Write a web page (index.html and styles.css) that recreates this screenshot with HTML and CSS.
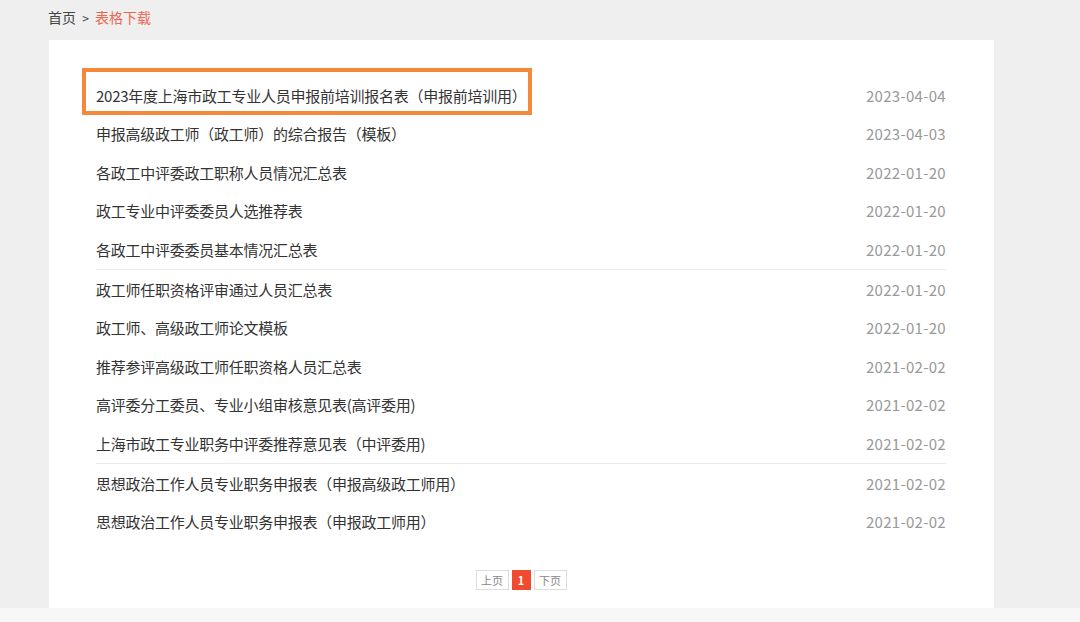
FILE: index.html
```html
<!DOCTYPE html>
<html lang="zh-CN">
<head>
  <meta charset="UTF-8">
  <title>表格下载</title>
  <link rel="stylesheet" href="styles.css">
</head>
<body>
<div class="crumb">
  <a class="crumb-home" href="#">首页</a>
  <span class="crumb-sep">&gt;</span>
  <span class="crumb-cur">表格下载</span>
</div>

<div class="panel">
  <div class="mark"></div>

  <ul class="list">
    <li class="row"><a href="#">2023年度上海市政工专业人员申报前培训报名表（申报前培训用）</a><span class="date">2023-04-04</span></li>
    <li class="row"><a href="#">申报高级政工师（政工师）的综合报告（模板）</a><span class="date">2023-04-03</span></li>
    <li class="row"><a href="#">各政工中评委政工职称人员情况汇总表</a><span class="date">2022-01-20</span></li>
    <li class="row"><a href="#">政工专业中评委委员人选推荐表</a><span class="date">2022-01-20</span></li>
    <li class="row"><a href="#">各政工中评委委员基本情况汇总表</a><span class="date">2022-01-20</span></li>
  </ul>
  <ul class="list">
    <li class="row"><a href="#">政工师任职资格评审通过人员汇总表</a><span class="date">2022-01-20</span></li>
    <li class="row"><a href="#">政工师、高级政工师论文模板</a><span class="date">2022-01-20</span></li>
    <li class="row"><a href="#">推荐参评高级政工师任职资格人员汇总表</a><span class="date">2021-02-02</span></li>
    <li class="row"><a href="#">高评委分工委员、专业小组审核意见表(高评委用)</a><span class="date">2021-02-02</span></li>
    <li class="row"><a href="#">上海市政工专业职务中评委推荐意见表（中评委用)</a><span class="date">2021-02-02</span></li>
  </ul>
  <ul class="list">
    <li class="row"><a href="#">思想政治工作人员专业职务申报表（申报高级政工师用）</a><span class="date">2021-02-02</span></li>
    <li class="row"><a href="#">思想政治工作人员专业职务申报表（申报政工师用）</a><span class="date">2021-02-02</span></li>
  </ul>

  <div class="pager">
    <a class="page-btn" href="#">上页</a>
    <span class="page-btn page-cur">1</span>
    <a class="page-btn" href="#">下页</a>
  </div>
</div>

<div class="footer"></div>
</body>
</html>
```

FILE: styles.css
```css
html, body {
    margin: 0;
    padding: 0;
    height: 100%;
    overflow: hidden;
}

body {
    background: #efefef;
    font-family: "Noto Sans CJK SC", "Liberation Sans", sans-serif;
    color: #333;
}

a {
    color: inherit;
    text-decoration: none;
}

.crumb {
    height: 40px;
    padding: 7px 0 0 48px;
    box-sizing: border-box;
    font-size: 14px;
    line-height: 20px;
}

.crumb-home {
    color: #444;
}

.crumb-sep {
    margin: 0 3px;
    color: #444;
    font-size: 12px;
}

.crumb-cur {
    color: #f0654e;
}

.panel {
    position: relative;
    width: 945px;
    height: 568px;
    margin-left: 49px;
    padding: 36px 48px 0 47px;
    box-sizing: border-box;
    background: #fff;
}

.mark {
    position: absolute;
    left: 33px;
    top: 28px;
    width: 450px;
    height: 47px;
    border: 4px solid #f5893b;
    box-sizing: border-box;
}

.list {
    margin: 0;
    padding: 0 0 0.5px;
    list-style: none;
    border-bottom: 1px solid #ebebeb;
}

.list:last-of-type {
    border-bottom: none;
}

.row {
    height: 38.5px;

    display: flex;
    align-items: center;
    justify-content: space-between;

    font-size: 15px;
    letter-spacing: -0.25px;
}

.date {
    color: #999;
    letter-spacing: 0.3px;
}

.pager {
    margin-top: 28px;

    display: flex;
    justify-content: center;
    gap: 3px;
}

.page-btn {
    width: 33px;
    height: 20px;
    box-sizing: border-box;
    border: 1px solid #ddd;
    font-size: 11px;
    line-height: 18px;
    text-align: center;
    color: #888;
}

.page-cur {
    width: 19px;
    border-color: #f04b30;
    background: #f04b30;
    color: #fff;
    font-weight: bold;
}

.footer {
    height: 14px;
    background: #f7f7f7;
}
```
